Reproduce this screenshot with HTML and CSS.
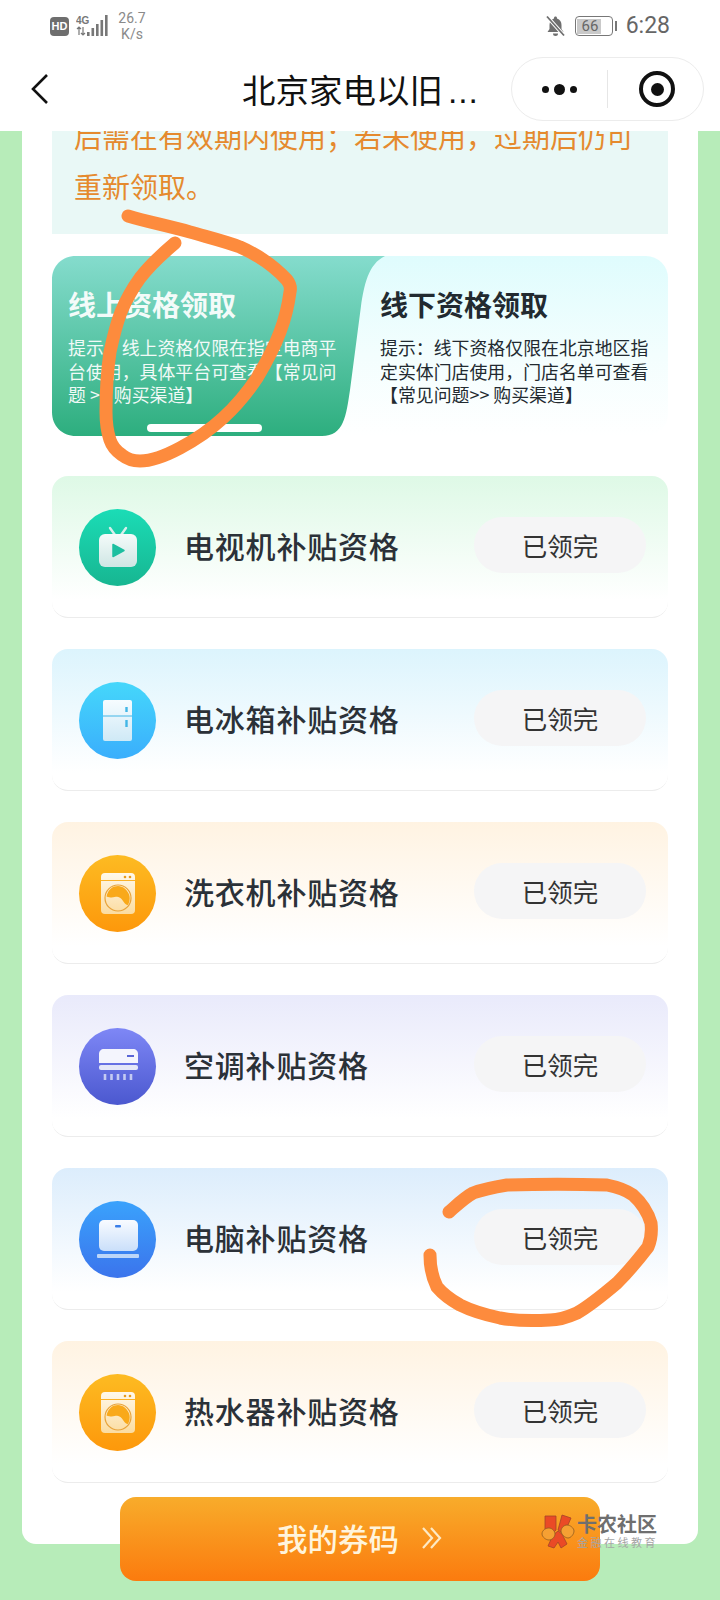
FILE: index.html
```html
<!DOCTYPE html>
<html lang="zh-CN">
<head>
    <meta charset="UTF-8">
    <meta name="viewport" content="width=device-width, initial-scale=1.0">
    <title>北京家电以旧换新</title>
    <link rel="stylesheet" href="styles.css">
</head>
<body>
    <!-- Status bar -->
    <div class="status-bar">
        <div class="status-left">
            <span class="hd-badge">HD</span>
            <svg class="signal" width="34" height="24" viewBox="0 0 34 24">
                <text x="0" y="10" class="signal-text">4G</text>
                <path d="M3 13v8M1 15l2-2 2 2M7 13v8M5 19l2 2 2-2" fill="none" stroke="#777" stroke-width="1.2"/>
                <rect x="11" y="18" width="2.6" height="4" fill="#777"/>
                <rect x="15.5" y="14" width="2.6" height="8" fill="#777"/>
                <rect x="20" y="10" width="2.6" height="12" fill="#777"/>
                <rect x="24.5" y="6" width="2.6" height="16" fill="#777"/>
                <rect x="29" y="1" width="2.6" height="21" fill="#777"/>
            </svg>
            <div class="net-speed">26.7<br>K/s</div>
        </div>
        <div class="status-right">
            <svg class="bell" width="21" height="22" viewBox="0 0 21 22">
                <path d="M10.5 1.5c-.9 0-1.5.6-1.5 1.5v.6C6 4.400 4.500 7 4.500 10v4L2.500 17h16l-2-3v-4c0-3-1.500-5.600-4.500-6.400V3c0-.9-.6-1.500-1.500-1.500z" fill="#6e6e6e"/>
                <path d="M8 18.500h5a2.500 2.500 0 0 1-5 0z" fill="#6e6e6e"/>
                <path d="M2.500 2l16 18" stroke="#fff" stroke-width="3.500"/>
                <path d="M2 1.500l17 19" stroke="#6e6e6e" stroke-width="1.800"/>
            </svg>
            <div class="battery"><span class="battery-level">66</span></div>
            <span class="battery-tip"></span>
            <span class="clock">6:28</span>
        </div>
    </div>

    <!-- Nav bar -->
    <div class="nav-bar">
        <svg class="back" width="20" height="32" viewBox="0 0 20 32">
            <path d="M17 2L3 16l14 14" fill="none" stroke="#111" stroke-width="2.600"/>
        </svg>
        <div class="nav-title">北京家电以旧<span class="nav-dots">...</span></div>
        <div class="capsule">
            <div class="capsule-dots"><i></i><b></b><i></i></div>
            <span class="capsule-line"></span>
            <div class="capsule-target"><i></i></div>
        </div>
    </div>

    <div class="page">
        <div class="panel">
            <div class="notice">
                <p>后需在有效期内使用；若未使用，过期后仍可</p>
                <p>重新领取。</p>
            </div>

            <!-- Online / offline tabs -->
            <div class="tabs">
                <svg class="tab-shape" width="336" height="180" viewBox="0 0 336 180">
                    <defs>
                        <linearGradient id="tabGreen" x1="0" y1="0" x2="0" y2="1">
                            <stop offset="0" stop-color="#85dccd"/>
                            <stop offset="1" stop-color="#2dae7e"/>
                        </linearGradient>
                    </defs>
                    <path d="M24 0H333C316 8 312 30 309 50L298 134C294 160 292 180 270 180H24C10 180 0 170 0 156V24C0 10 10 0 24 0z" fill="url(#tabGreen)"/>
                </svg>
                <div class="tab tab-on">
                    <h3>线上资格领取</h3>
                    <p>提示：线上资格仅限在指定电商平台使用，具体平台可查看【常见问题 &gt;&gt; 购买渠道】</p>
                    <span class="tab-line"></span>
                </div>
                <div class="tab tab-off">
                    <h3>线下资格领取</h3>
                    <p>提示：线下资格仅限在北京地区指定实体门店使用，门店名单可查看<br>【常见问题&gt;&gt; 购买渠道】</p>
                </div>
            </div>

            <!-- Subsidy rows -->
            <div class="cards">
                <div class="card card-green">
                    <div class="card-icon icon-green">
                        <svg width="44" height="44" viewBox="0 0 44 44">
                            <defs>
                                <linearGradient id="tile" x1="0" y1="0" x2="0" y2="1">
                                    <stop offset="0" stop-color="#f4fbfa"/>
                                    <stop offset="1" stop-color="#cfe6e4"/>
                                </linearGradient>
                            </defs>
                            <path d="M14 2l5 7M30 2l-5 7" stroke="#d8efec" stroke-width="2.400" stroke-linecap="round"/>
                            <rect x="3" y="8" width="38" height="33" rx="6" fill="url(#tile)"/>
                            <path d="M17 18.500l11 6-11 6z" fill="#1cbfa0" stroke="#1cbfa0" stroke-width="1.500" stroke-linejoin="round"/>
                        </svg>
                    </div>
                    <div class="card-name">电视机补贴资格</div>
                    <div class="card-btn">已领完</div>
                </div>
                <div class="card card-blue">
                    <div class="card-icon icon-sky">
                        <svg width="44" height="44" viewBox="0 0 44 44">
                            <defs>
                                <linearGradient id="tile2" x1="0" y1="0" x2="0" y2="1">
                                    <stop offset="0" stop-color="#f6fcff"/>
                                    <stop offset="1" stop-color="#cfe9f6"/>
                                </linearGradient>
                            </defs>
                            <rect x="7" y="1" width="29" height="41" rx="2" fill="url(#tile2)"/>
                            <path d="M7 17h29" stroke="#42b6e6" stroke-width="1"/>
                            <path d="M30.500 8v5M30.500 21v7" stroke="#42b6e6" stroke-width="2.400"/>
                        </svg>
                    </div>
                    <div class="card-name">电冰箱补贴资格</div>
                    <div class="card-btn">已领完</div>
                </div>
                <div class="card card-orange">
                    <div class="card-icon icon-orange">
                        <svg width="44" height="44" viewBox="0 0 44 44">
                            <defs>
                                <linearGradient id="tile3" x1="0" y1="0" x2="0" y2="1">
                                    <stop offset="0" stop-color="#fff9ec"/>
                                    <stop offset="1" stop-color="#fbdca0"/>
                                </linearGradient>
                            </defs>
                            <rect x="5" y="1" width="34" height="41" rx="4" fill="url(#tile3)"/>
                            <path d="M5 8.500h34" stroke="#fbb32a" stroke-width="1"/>
                            <circle cx="29" cy="5" r="1.300" fill="#e89a1c"/>
                            <circle cx="34" cy="5" r="1.300" fill="#e89a1c"/>
                            <circle cx="22" cy="26" r="13" fill="none" stroke="#e8a33a" stroke-width="1.200"/>
                            <path d="M10.500 24.500C12 17 17 14 22 14s10 4 11.500 10c.5 3 0 6-1.500 9-4 0-5-6-8.500-7.500-3.500-2-6 1.500-13-1z" fill="#f9a91a"/>
                        </svg>
                    </div>
                    <div class="card-name">洗衣机补贴资格</div>
                    <div class="card-btn">已领完</div>
                </div>
                <div class="card card-purple">
                    <div class="card-icon icon-purple">
                        <svg width="44" height="44" viewBox="0 0 44 44">
                            <path d="M3 9c0-3 2-5 5-5h29c3 0 5 2 5 5v9H3z" fill="#f4f5fd"/>
                            <rect x="3" y="20" width="39" height="5" rx="2" fill="#e4e7f8"/>
                            <rect x="31" y="10" width="7" height="2" fill="#5a66d6"/>
                            <path d="M9 29v6M15.500 29v6M22 29v6M28.500 29v6M35 29v6" stroke="#c4caf2" stroke-width="2.600"/>
                        </svg>
                    </div>
                    <div class="card-name">空调补贴资格</div>
                    <div class="card-btn">已领完</div>
                </div>
                <div class="card card-sky">
                    <div class="card-icon icon-blue">
                        <svg width="44" height="44" viewBox="0 0 44 44">
                            <defs>
                                <linearGradient id="tile5" x1="0" y1="0" x2="0" y2="1">
                                    <stop offset="0" stop-color="#f8fbff"/>
                                    <stop offset="1" stop-color="#cadffa"/>
                                </linearGradient>
                            </defs>
                            <rect x="3" y="2" width="39" height="31" rx="5" fill="url(#tile5)"/>
                            <rect x="19" y="7" width="6" height="2.500" rx="1" fill="#3a7ee8"/>
                            <rect x="1" y="36" width="42" height="4" rx="1" fill="#bcd6f8"/>
                        </svg>
                    </div>
                    <div class="card-name">电脑补贴资格</div>
                    <div class="card-btn">已领完</div>
                </div>
                <div class="card card-orange">
                    <div class="card-icon icon-orange">
                        <svg width="44" height="44" viewBox="0 0 44 44">
                            <rect x="5" y="1" width="34" height="41" rx="4" fill="url(#tile3)"/>
                            <path d="M5 8.500h34" stroke="#fbb32a" stroke-width="1"/>
                            <circle cx="29" cy="5" r="1.300" fill="#e89a1c"/>
                            <circle cx="34" cy="5" r="1.300" fill="#e89a1c"/>
                            <circle cx="22" cy="26" r="13" fill="none" stroke="#e8a33a" stroke-width="1.200"/>
                            <path d="M10.500 24.500C12 17 17 14 22 14s10 4 11.500 10c.5 3 0 6-1.500 9-4 0-5-6-8.500-7.500-3.500-2-6 1.500-13-1z" fill="#f9a91a"/>
                        </svg>
                    </div>
                    <div class="card-name">热水器补贴资格</div>
                    <div class="card-btn">已领完</div>
                </div>
            </div>
        </div>
    </div>

    <!-- Floating button -->
    <div class="my-codes">
        <span>我的券码</span>
        <svg width="22" height="24" viewBox="0 0 22 24">
            <path d="M2 2l9 10-9 10M10 2l9 10-9 10" fill="none" stroke="#fde9c4" stroke-width="2.200"/>
        </svg>
    </div>

    <!-- Forum watermark -->
    <div class="watermark">
        <svg width="35" height="36" viewBox="0 0 35 36">
            <path d="M4 3h11v14l-2 2-9-3zM21 2l9 3-7 16-6-4zM12 22l5-4 4 3 5 10-6 4-3-6-4 6-6-2z" fill="#ea4a26" stroke="#a5442a" stroke-width=".8"/>
            <path d="M1 21c0-4 4-6 7-6s6 3 6 6-3 6-6 6-7-3-7-6zM20 18c0-3 3-6 6-6s7 3 7 6-3 7-6 7-7-4-7-7z" fill="#f5a033" stroke="#8f5a20" stroke-width=".8"/>
        </svg>
        <div class="watermark-text">
            <strong>卡农社区</strong>
            <span>金融在线教育</span>
        </div>
    </div>

    <!-- Hand-drawn marks on the screenshot -->
    <svg class="scribble" width="720" height="1600" viewBox="0 0 720 1600">
        <path d="M128 216C148 222 169 226 190 232C207 237 224 241 240 247C258 255 275 267 287 280C290 284 291 288 290 292C288 307 285 319 280 332C274 348 266 363 257 378C247 393 236 406 223 418C210 430 195 440 180 448C165 456 150 461 140 461C133 461 127 459 122 455C116 451 112 446 110 440C107 431 106 421 106 412C106 392 107 372 110 352C113 338 116 325 121 312C126 300 132 289 140 278C150 265 162 254 175 243" fill="none" stroke="#fd8b3d" stroke-width="13" stroke-linecap="round" stroke-linejoin="round"/>
        <path d="M449 1212C457 1205 464 1198 473 1193C484 1189 495 1187 507 1185C540 1184 575 1184 607 1185C617 1187 626 1190 633 1195C642 1203 648 1213 651 1223C652 1232 651 1240 648 1247C638 1260 628 1272 617 1283C604 1294 591 1305 577 1313C568 1317 559 1320 550 1320C533 1321 516 1321 500 1318C486 1315 472 1311 460 1305C451 1300 443 1294 437 1287C432 1277 430 1266 430 1255" fill="none" stroke="#fd8b3d" stroke-width="13" stroke-linecap="round" stroke-linejoin="round"/>
    </svg>
</body>
</html>
```

FILE: styles.css
```css
/* Base */
html, body {
    margin: 0;
    padding: 0;
}

body {
    position: relative;
    width: 720px;
    height: 1600px;
    overflow: hidden;
    background-color: #b7ecb9;
    font-family: "Noto Sans CJK SC", "Noto Sans", sans-serif;
}

p, h3 {
    margin: 0;
}

/* Status bar */
.status-bar {
    height: 52px;
    padding: 0 50px;
    background-color: #ffffff;
    display: flex;
    justify-content: space-between;
    align-items: center;
    color: #777777;
}

.status-left, .status-right {
    display: flex;
    align-items: center;
}

.hd-badge {
    width: 19px;
    height: 19px;
    border-radius: 4px;
    background-color: #6e6e6e;
    color: #ffffff;
    font: bold 11px/19px "Liberation Sans", sans-serif;
    text-align: center;
}

.signal {
    margin-left: 7px;
}

.signal-text {
    font: bold 10px "Liberation Sans", sans-serif;
    fill: #777777;
}

.net-speed {
    margin-left: 7px;
    width: 30px;
    font: 14px/16px "Roboto", sans-serif;
    text-align: center;
    color: #8a8a8a;
}

.bell {
    margin-right: 9px;
}

.battery {
    width: 38px;
    height: 20px;
    border: 1.5px solid #777777;
    border-radius: 4px;
    padding: 1.500px;
    box-sizing: border-box;
    display: flex;
}

.battery-level {
    width: 66%;
    background-color: #c9c9c9;
    font: 15px/14px "Roboto", sans-serif;
    text-align: center;
    color: #666666;
    white-space: nowrap;
    padding-left: 2px;
}

.battery-tip {
    width: 2px;
    height: 10px;
    margin-left: 2px;
    background-color: #777777;
}

.clock {
    margin-left: 9px;
    margin-right: 0;
    font: 23px/24px "Roboto", sans-serif;
    color: #666666;
}

/* Nav bar */
.nav-bar {
    height: 79px;
    position: relative;
    background-color: #ffffff;
    display: flex;
    align-items: center;
}

.back {
    margin-left: 30px;
    margin-bottom: 6px;
}

.nav-title {
    margin-left: 192px;
    margin-bottom: 3px;
    width: 269px;
    font-size: 33.500px;
    line-height: 40px;
    color: #111111;
    white-space: nowrap;
}

.nav-dots {
    margin-left: 5px;
    letter-spacing: 1px;
    font-family: "Liberation Sans", sans-serif;
}

.capsule {
    box-sizing: border-box;
    width: 193px;
    height: 64px;
    margin-bottom: 5px;
    border: 1px solid #ececec;
    border-radius: 32px;
    display: flex;
    align-items: center;
}

.capsule-dots {
    width: 95px;
    display: flex;
    justify-content: center;
    align-items: center;
    gap: 5px;
}

.capsule-dots i {
    width: 7px;
    height: 7px;
    border-radius: 50%;
    background-color: #111111;
}

.capsule-dots b {
    width: 11px;
    height: 11px;
    border-radius: 50%;
    background-color: #111111;
}

.capsule-line {
    width: 1px;
    height: 38px;
    background-color: #e6e6e6;
}

.capsule-target {
    box-sizing: border-box;
    width: 36px;
    height: 36px;
    margin-left: 31px;
    border: 4.500px solid #111111;
    border-radius: 50%;
    display: flex;
    justify-content: center;
    align-items: center;
}

.capsule-target i {
    width: 13px;
    height: 13px;
    border-radius: 50%;
    background-color: #111111;
}

/* Page panel */
.page {
    padding: 0 22px;
}

.panel {
    height: 1413px;
    padding: 0 30px;
    box-sizing: border-box;
    background-color: #ffffff;
    border-radius: 0 0 14px 14px;
}

.notice {
    height: 103px;
    padding-left: 22px;
    overflow: hidden;
    background-color: #e9f8f6;
    color: #e58a2e;
    font-size: 28px;
    line-height: 50px;
}

.notice p:first-child {
    margin-top: -20px;
    white-space: nowrap;
}

/* Tabs */
.tabs {
    position: relative;
    height: 180px;
    margin-top: 22px;
    border-radius: 22px;
    background: linear-gradient(180deg, #dffcfd 0%, #f3fefe 55%, #ffffff 100%);
    display: flex;
}

.tab-shape {
    position: absolute;
    left: 0;
    top: 0;
}

.tab {
    position: relative;
    box-sizing: border-box;
}

.tab h3 {
    font-size: 28px;
    line-height: 38px;
    font-weight: 700;
}

.tab p {
    margin-top: 13px;
    font-size: 17.900px;
    line-height: 23.500px;
}

.tab-on {
    width: 328px;
    padding: 29px 0 0 16px;
    color: #ffffff;
}

.tab-on h3, .tab-on p {
    opacity: .92;
}

.tab-on p {
    width: 272px;
}

.tab-off {
    flex: 1;
    padding: 29px 12px 0 0;
    color: #222a30;
}

.tab-off p {
    width: 272px;
}

.tab-line {
    position: absolute;
    left: 95px;
    bottom: 4px;
    width: 115px;
    height: 8px;
    border-radius: 4px;
    background-color: #ffffff;
}

/* Rows */
.cards {
    margin-top: 40px;
    display: flex;
    flex-direction: column;
    gap: 31px;
}

.card {
    box-sizing: border-box;
    height: 142px;
    padding: 33px 22px 0 27px;
    border-radius: 16px;
    border-bottom: 1px solid #ececec;
    display: flex;
    align-items: flex-start;
}

.card-green { background: linear-gradient(180deg, #def9e6 0%, #ffffff 88%); }
.card-blue { background: linear-gradient(180deg, #dcf4fd 0%, #ffffff 88%); }
.card-orange { background: linear-gradient(180deg, #fff3e2 0%, #ffffff 88%); }
.card-purple { background: linear-gradient(180deg, #e9eafb 0%, #ffffff 88%); }
.card-sky { background: linear-gradient(180deg, #dcedfc 0%, #ffffff 88%); }

.card-icon {
    width: 77px;
    height: 77px;
    border-radius: 50%;
    flex-shrink: 0;
    display: flex;
    justify-content: center;
    align-items: center;
}

.icon-green { background: linear-gradient(180deg, #1bdcb6 0%, #17b691 100%); }
.icon-sky { background: linear-gradient(180deg, #45d7fb 0%, #3aaefc 100%); }
.icon-orange { background: linear-gradient(180deg, #fdbb22 0%, #fd980b 100%); }
.icon-purple { background: linear-gradient(180deg, #7e87f6 0%, #4b58cf 100%); }
.icon-blue { background: linear-gradient(180deg, #3aa2fc 0%, #3b74ec 100%); }

.card-name {
    margin-left: 28px;
    margin-top: -2px;
    width: 290px;
    font-size: 30px;
    line-height: 77px;
    letter-spacing: .8px;
    font-weight: 500;
    color: #2b3138;
    white-space: nowrap;
}

.card-btn {
    width: 172px;
    height: 56px;
    margin-top: 8px;
    border-radius: 28px;
    background-color: #f5f5f6;
    color: #333333;
    font-size: 25.500px;
    line-height: 56px;
    text-align: center;
}

/* Floating button */
.my-codes {
    position: absolute;
    left: 120px;
    top: 1497px;
    width: 480px;
    height: 84px;
    padding-bottom: 3px;
    box-sizing: border-box;
    border-radius: 16px;
    background: linear-gradient(180deg, #f8ac2b 0%, #fb7b0e 100%);
    color: #fff4dc;
    font-size: 30.500px;
    font-weight: 500;
    display: flex;
    justify-content: center;
    align-items: center;
    gap: 22px;
}

/* Watermark */
.watermark {
    position: absolute;
    left: 541px;
    top: 1512px;
    display: flex;
    align-items: center;
}

.watermark-text {
    margin-left: 1px;
    display: flex;
    flex-direction: column;
    color: #6f6f6f;
}

.watermark-text strong {
    font-size: 20px;
    line-height: 24px;
}

.watermark-text span {
    font-size: 11px;
    line-height: 13px;
    letter-spacing: 2.500px;
    color: #a5a5a5;
}

.scribble {
    position: absolute;
    left: 0;
    top: 0;
    pointer-events: none;
}
```
